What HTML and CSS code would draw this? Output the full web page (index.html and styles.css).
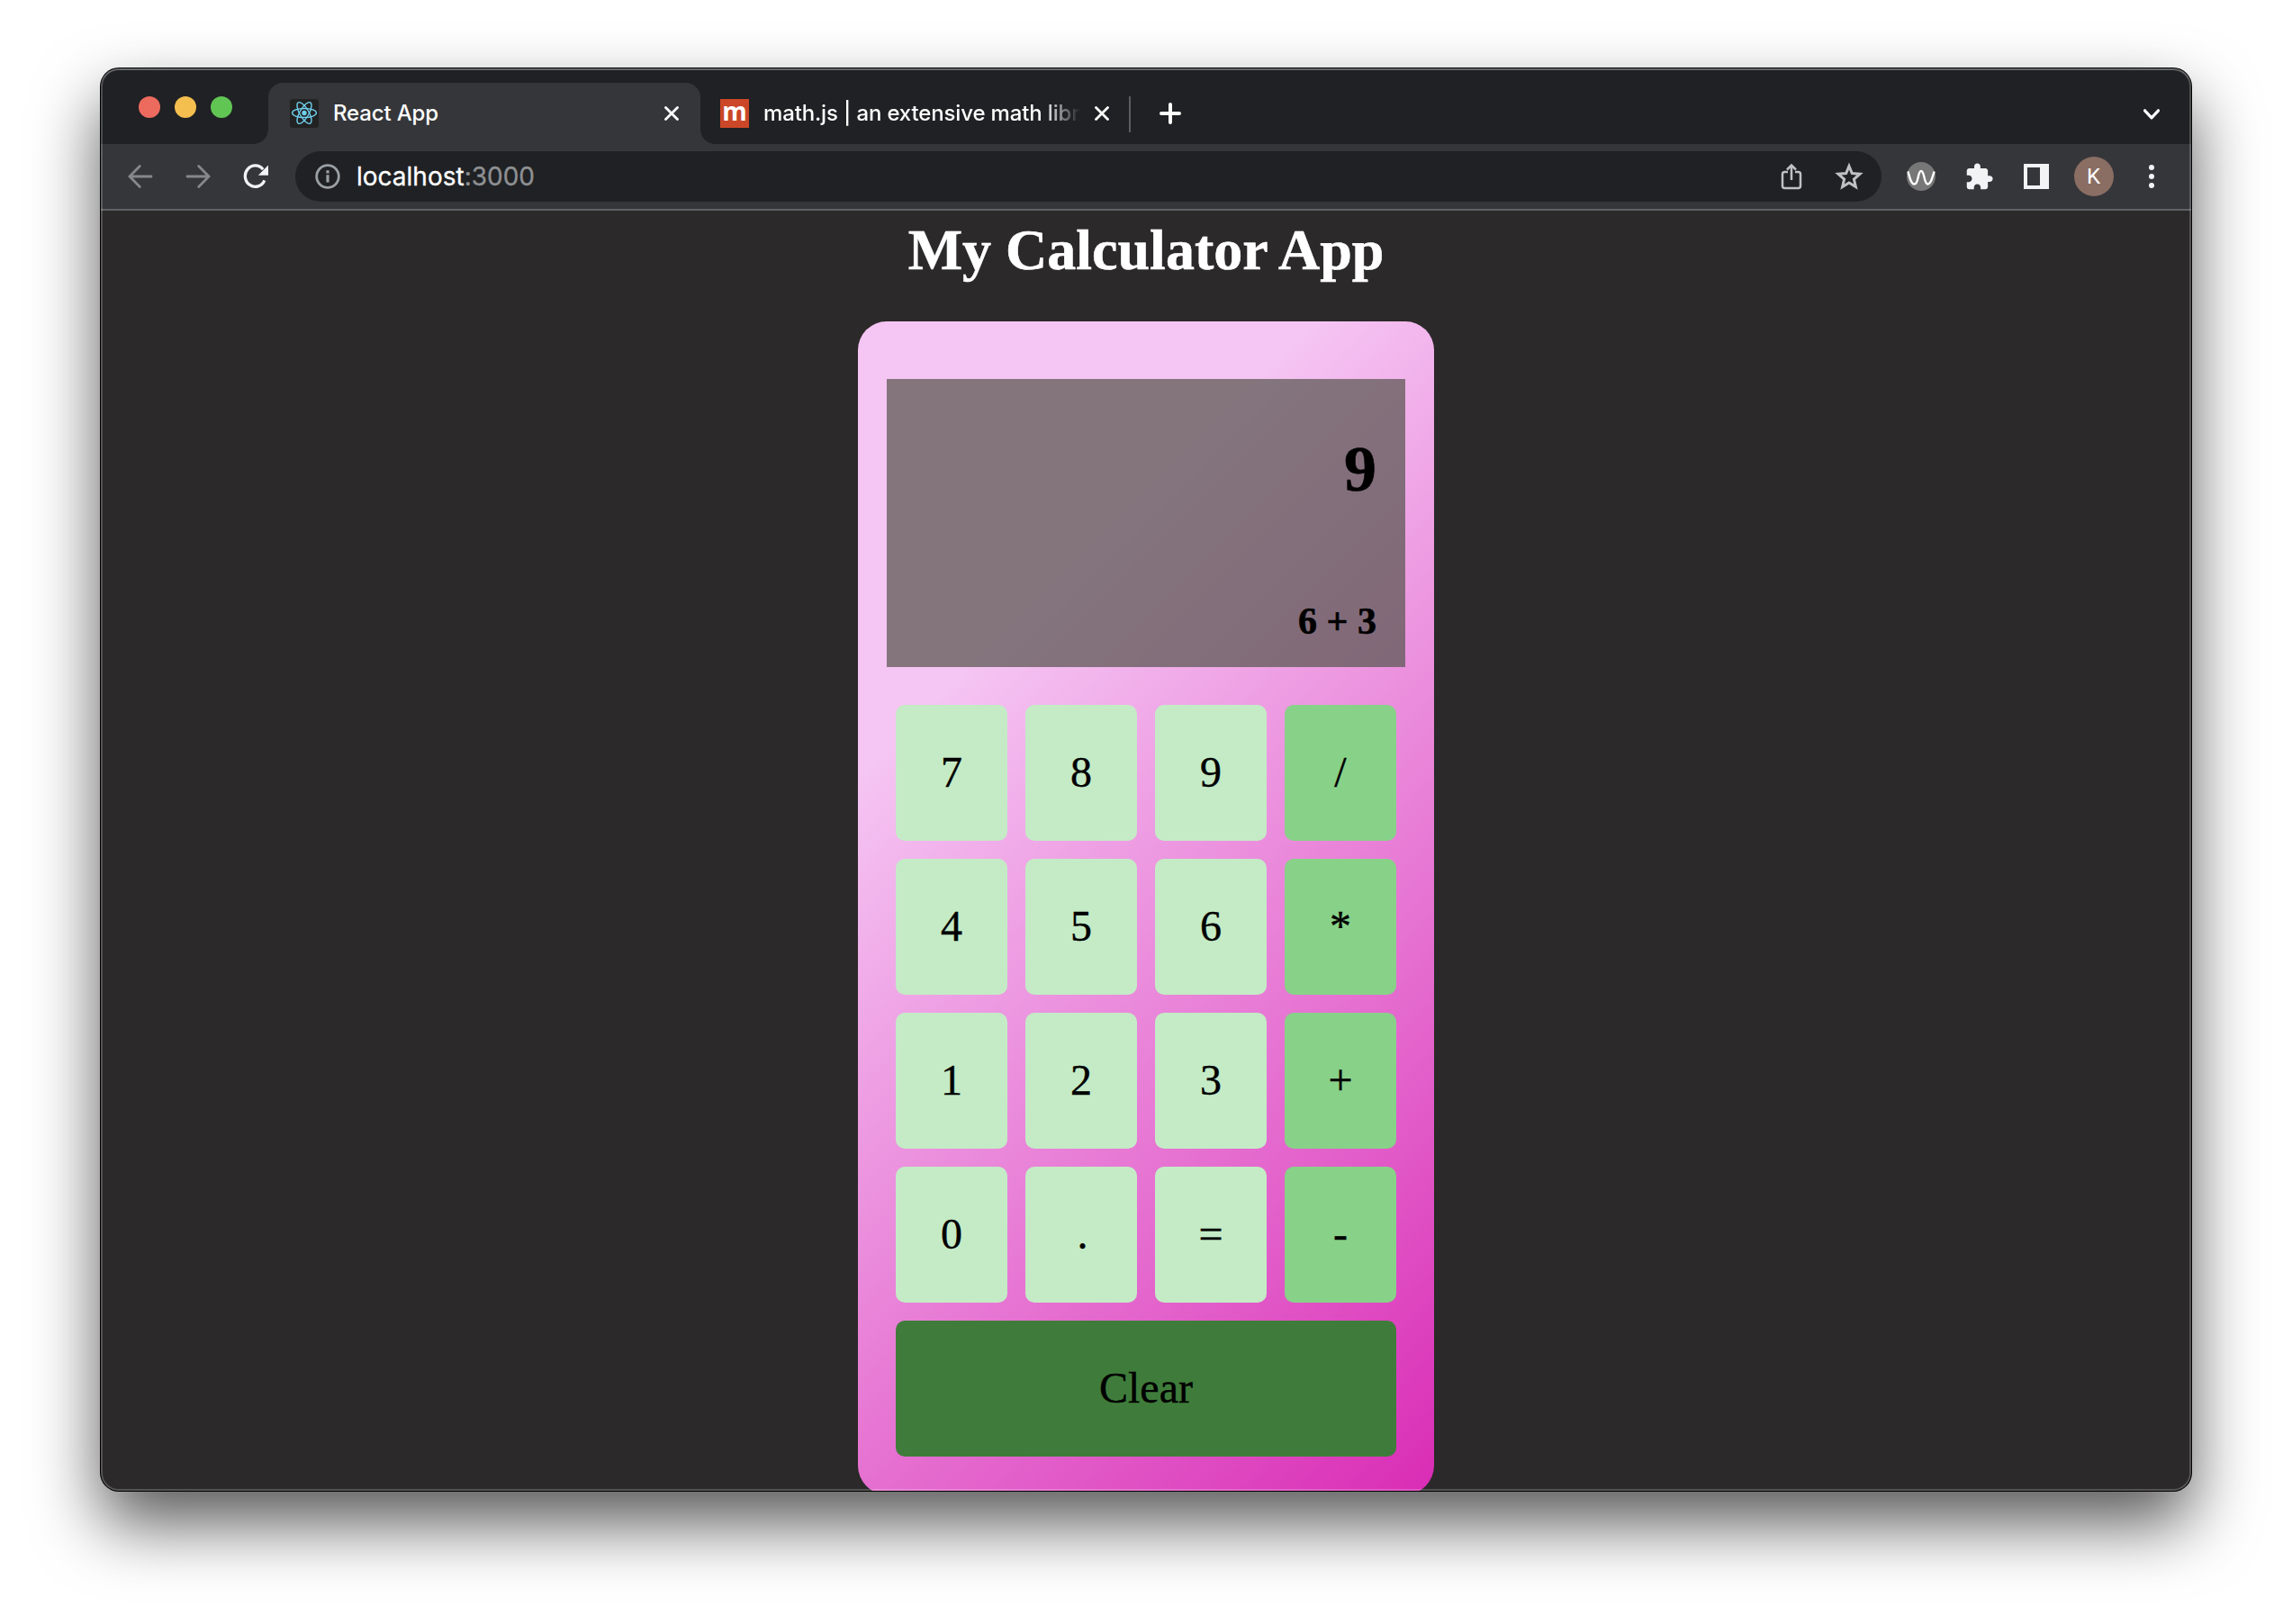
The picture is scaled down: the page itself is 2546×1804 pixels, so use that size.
FILE: index.html
```html
<!DOCTYPE html>
<html lang="en">
<head>
<meta charset="utf-8">
<title>React App</title>
<link rel="stylesheet" href="styles.css">
</head>
<body>
<div class="window">
  <div class="tabstrip">
    <div class="lights">
      <span class="light light-close"></span>
      <span class="light light-min"></span>
      <span class="light light-max"></span>
    </div>
    <div class="tab tab-active">
      <svg class="favicon" viewBox="0 0 32 32">
        <rect width="32" height="32" rx="3.5" fill="#222"/>
        <g fill="none" stroke="#6fcfee" stroke-width="1.4">
          <ellipse cx="16" cy="15.500" rx="13.400" ry="5"/>
          <ellipse cx="16" cy="15.500" rx="13.400" ry="5" transform="rotate(60 16 15.500)"/>
          <ellipse cx="16" cy="15.500" rx="13.400" ry="5" transform="rotate(120 16 15.500)"/>
        </g>
        <circle cx="16" cy="15.500" r="2.700" fill="#6fcfee"/>
      </svg>
      <span class="tab-title">React App</span>
      <svg class="close" viewBox="0 0 16 16"><path d="M1.500 1.500l13 13M14.500 1.500l-13 13"/></svg>
    </div>
    <div class="tab tab-back">
      <span class="favicon favicon-math">m</span>
      <span class="tab-title tab-title-fade">math.js | an extensive math library</span>
      <svg class="close" viewBox="0 0 16 16"><path d="M1.500 1.500l13 13M14.500 1.500l-13 13"/></svg>
    </div>
    <span class="divider"></span>
    <svg class="new-tab" viewBox="0 0 24 24"><path d="M12 2v20M2 12h20"/></svg>
    <svg class="tab-search" viewBox="0 0 20 14"><path d="M2.500 2.800l7.500 8 7.500-8"/></svg>
  </div>

  <div class="toolbar">
    <span class="tool"><svg class="arrow" viewBox="0 0 28 28"><path d="M26 14H3M13.300 2.500L2 14l11.300 11.500"/></svg></span>
    <span class="tool"><svg class="arrow" viewBox="0 0 28 28"><path d="M2 14h23M14.700 2.500L26 14 14.700 25.500"/></svg></span>
    <span class="tool"><svg class="icon28" viewBox="0 0 28 28"><path d="M23.800 18.300A11.200 11.700 0 1 1 22.200 6.200" fill="none" stroke="#f1f3f4" stroke-width="3.300"/><path d="M28 1.500v11.200H16.800z" fill="#f1f3f4"/></svg></span>
    <div class="omnibox">
      <svg class="info" viewBox="0 0 28 28"><circle cx="14" cy="14" r="12.300" fill="none" stroke="#9aa0a6" stroke-width="2.800"/><path d="M14 12.300v8.200M14 7.300v3.200" stroke="#9aa0a6" stroke-width="3.200"/></svg>
      <span class="url">localhost<span class="port">:3000</span></span>
      <span class="tool"><svg class="share" viewBox="0 0 24 30"><path d="M8 10H4.500Q2 10 2 12.500v13Q2 28 4.500 28h15q2.500 0 2.500-2.500v-13Q22 10 19.500 10H16M12 19V3M7 7.500l5-5 5 5"/></svg></span>
      <span class="tool"><svg class="star" viewBox="0 0 36 36"><path d="M18 6.500l3.300 8.100 8.700.7-6.600 5.700 2 8.500-7.400-4.500-7.400 4.500 2-8.500-6.600-5.700 8.700-.7z"/></svg></span>
    </div>
    <span class="tool"><svg class="icon32" viewBox="0 0 32 32"><circle cx="16" cy="16" r="16" fill="#777"/><path d="M1.200 10.500C3 13 3.500 24.500 8.500 24.500S12 10 16 10s3 14.500 7.500 14.500S29 13 30.800 10.500" fill="none" stroke="#fff" stroke-width="2.400"/></svg></span>
    <span class="tool"><svg class="puzzle" viewBox="0 0 24 24"><path fill="#f1f3f4" d="M20.500 11H19V7c0-1.100-.9-2-2-2h-4V3.500C13 2.120 11.880 1 10.500 1S8 2.120 8 3.500V5H4c-1.100 0-1.990.9-1.990 2v3.800H3.500c1.490 0 2.700 1.210 2.700 2.700s-1.210 2.700-2.700 2.700H2V20c0 1.100.9 2 2 2h3.800v-1.500c0-1.490 1.210-2.700 2.700-2.700 1.490 0 2.700 1.210 2.700 2.700V22H17c1.100 0 2-.9 2-2v-4h1.500c1.380 0 2.500-1.120 2.500-2.500S21.880 11 20.500 11z"/></svg></span>
    <span class="tool"><svg class="icon28" viewBox="0 0 28 28"><path fill="#f1f3f4" fill-rule="evenodd" d="M0 0h28v28H0zM4 4v20h14V4z"/></svg></span>
    <span class="tool"><span class="avatar">K</span></span>
    <span class="tool"><svg class="icon28" viewBox="0 0 28 28" fill="#f1f3f4"><circle cx="14" cy="4" r="3"/><circle cx="14" cy="14" r="3"/><circle cx="14" cy="24" r="3"/></svg></span>
  </div>

  <main class="page">
    <h1 class="heading">My Calculator App</h1>
    <section class="calculator">
      <div class="screen">
        <div class="result">9</div>
        <div class="expression">6 + 3</div>
      </div>
      <div class="keys">
        <div class="key">7</div><div class="key">8</div><div class="key">9</div><div class="key operator">/</div>
        <div class="key">4</div><div class="key">5</div><div class="key">6</div><div class="key operator">*</div>
        <div class="key">1</div><div class="key">2</div><div class="key">3</div><div class="key operator">+</div>
        <div class="key">0</div><div class="key point">.</div><div class="key">=</div><div class="key operator">-</div>
        <div class="key clear">Clear</div>
      </div>
    </section>
  </main>
</div>
</body>
</html>
```
FILE: styles.css
```css
* { box-sizing: border-box; }

body {
  margin: 0;
  height: 1804px;
  padding: 76px 112px 148px;
  background: #fff;
  overflow: hidden;
}

svg { display: block; flex: none; }

.window {
  position: relative;
  height: 1580px;
  border-radius: 20px;
  display: flex;
  flex-direction: column;
  background: #2b2929;
  box-shadow: 0 0 0 1px #000, 0 36px 74px rgba(0, 0, 0, .66);
  overflow: hidden;
}

/* light hairline round the inside of the window */
.window::after {
  content: "";
  position: absolute;
  inset: 0;
  border-radius: 20px;
  box-shadow: inset 0 0 0 2px rgba(255, 255, 255, .2), inset 0 2px 0 rgba(255, 255, 255, .16);
  pointer-events: none;
}

/* Tabs */
.tabstrip {
  flex: none;
  height: 84px;
  padding: 16px 34px 0 42px;
  display: flex;
  background: #202124;
  font-family: Inter, "Liberation Sans", sans-serif;
}

.lights {
  display: flex;
  gap: 16px;
  width: 144px;
  padding-top: 15px;
}

.light { width: 24px; height: 24px; border-radius: 50%; }
.light-close { background: #ed6a5e; }
.light-min { background: #f5bf4f; }
.light-max { background: #61c554; }

.tab {
  position: relative;
  display: flex;
  align-items: center;
  height: 68px;
}

.tab-active {
  width: 480px;
  padding: 0 24px;
  background: #35363a;
  border-radius: 16px 16px 0 0;
}

.tab-active::before,
.tab-active::after {
  content: "";
  position: absolute;
  bottom: 0;
  width: 16px;
  height: 16px;
}

.tab-active::before { left: -16px; background: radial-gradient(circle at 0 0, transparent 15.5px, #35363a 16px); }
.tab-active::after { right: -16px; background: radial-gradient(circle at 100% 0, transparent 15.5px, #35363a 16px); }

.tab-back { width: 476px; padding: 0 22px; }

.favicon { width: 32px; height: 32px; flex: none; }

.favicon-math {
  background: #cb4728;
  color: #fff;
  font: 700 28px/26px "Open Sans", sans-serif;
  text-align: center;
}

.tab-title {
  flex: 1;
  margin-left: 16px;
  color: #fff;
  font-size: 24px;
  line-height: 32px;
  font-weight: 500;
  letter-spacing: -.15px;
  white-space: nowrap;
  overflow: hidden;
}

.tab-title-fade {
  margin-right: 16px;
  -webkit-mask-image: linear-gradient(to right, #000 310px, transparent 352px);
  mask-image: linear-gradient(to right, #000 310px, transparent 352px);
}

.close { width: 16px; height: 16px; fill: none; stroke: #fff; stroke-width: 2.8; stroke-linecap: round; }

.divider { width: 2px; height: 40px; margin: 15px 32px 0 0; background: #5c5d5f; }

.new-tab { width: 24px; height: 24px; margin-top: 22px; fill: none; stroke: #fff; stroke-width: 4; stroke-linecap: round; }

.tab-search { width: 20px; height: 14px; margin: 28px 0 0 auto; fill: none; stroke: #fff; stroke-width: 3.2; stroke-linecap: round; stroke-linejoin: round; }

/* Toolbar */
.toolbar {
  flex: none;
  height: 74px;
  padding: 0 12px;
  display: flex;
  align-items: center;
  background: #35363a;
  border-bottom: 2px solid #5f6265;
}

.tool { width: 64px; flex: none; display: flex; justify-content: center; align-items: center; }

.arrow { width: 28px; height: 28px; fill: none; stroke: #86878a; stroke-width: 2.8; stroke-linecap: round; }
.icon28 { width: 28px; height: 28px; }
.icon32 { width: 32px; height: 32px; }
.info { width: 28px; height: 28px; }
.share { width: 24px; height: 30px; fill: none; stroke: #bdc1c6; stroke-width: 2.5; }
.star { width: 36px; height: 36px; fill: none; stroke: #bdc1c6; stroke-width: 3; }
.puzzle { width: 33px; height: 33px; }

.omnibox {
  flex: 1;
  height: 56px;
  margin: 0 12px;
  padding: 0 4px 0 22px;
  display: flex;
  align-items: center;
  border-radius: 28px;
  background: #202124;
}

.url {
  flex: 1;
  margin-left: 18px;
  color: #fff;
  font: 400 28px/36px Inter, "Liberation Sans", sans-serif;
  -webkit-text-stroke: .3px;
}

.port { color: #8e9093; }

.avatar {
  width: 44px;
  height: 44px;
  padding-right: 1px;
  border-radius: 50%;
  background: #8a6e63;
  color: #fff;
  font: 400 24px/44px Roboto, sans-serif;
  text-align: center;
}

/* Page */
.page {
  flex: 1;
  min-height: 0;
  display: flex;
  flex-direction: column;
  align-items: center;
  overflow: hidden;
  font-family: "Liberation Serif", "Times New Roman", serif;
}

.heading {
  flex: none;
  margin: 7px 0 42px;
  color: #fff;
  font-size: 64px;
  line-height: 74px;
  font-weight: 700;
  -webkit-text-stroke: .6px #fff;
}

.calculator {
  flex: none;
  width: 640px;
  height: 1303px;
  padding: 64px 32px 42px;
  border-radius: 32px;
  background: linear-gradient(315deg, #d92cb5 0%, #f5c5f3 74%);
}

.screen {
  height: 320px;
  padding: 60px 32px 27px;
  display: flex;
  flex-direction: column;
  justify-content: space-between;
  background: rgba(94, 89, 85, .75);
  color: #000;
  font-weight: 700;
  text-align: right;
  -webkit-text-stroke: .6px #000;
}

.result { font-size: 72px; line-height: 80px; }
.expression { font-size: 42px; line-height: 48px; }

.keys {
  display: grid;
  grid-template-columns: repeat(4, 124px);
  grid-auto-rows: 151px;
  gap: 20px;
  padding: 42px 10px 0;
}

.key {
  border-radius: 10px;
  background: #c4ebc6;
  color: #000;
  font-size: 48px;
  line-height: 149px;
  text-align: center;
  -webkit-text-stroke: .4px #000;
}

.point { padding-left: 3px; }
.operator { background: #88d189; }
.clear { grid-column: 1 / -1; background: #3f7c3b; }
```
